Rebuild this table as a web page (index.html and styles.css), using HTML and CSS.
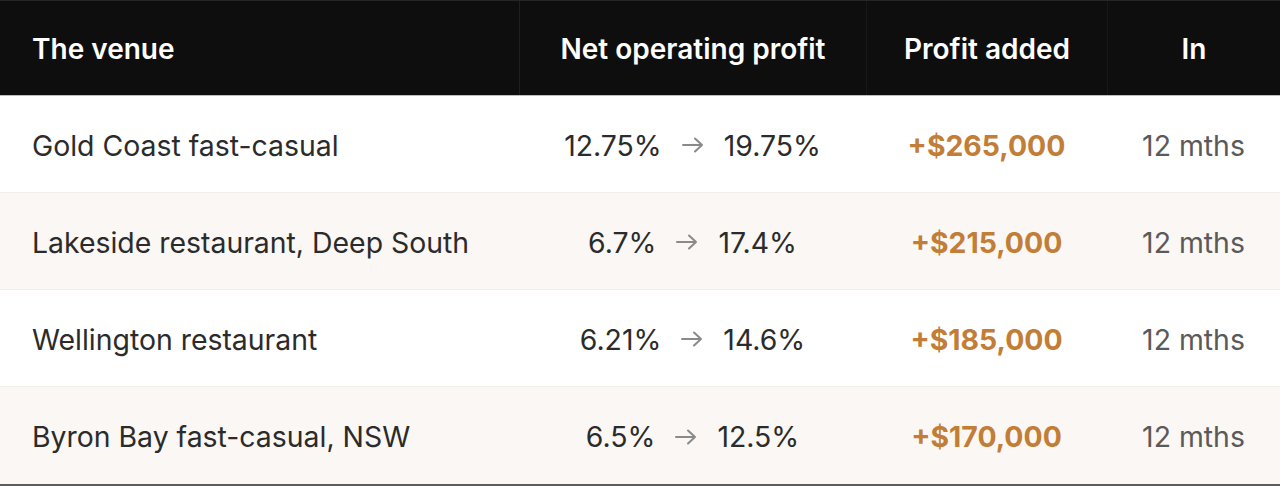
FILE: index.html
```html
<!DOCTYPE html>
<html lang="en">
<head>
<meta charset="utf-8">
<title>Results</title>
<link rel="stylesheet" href="styles.css">
</head>
<body>
<div class="table">
  <div class="row head">
    <div class="cell venue">The venue</div>
    <div class="cell c">Net operating profit</div>
    <div class="cell c">Profit added</div>
    <div class="cell c">In</div>
  </div>
  <div class="row">
    <div class="cell venue">Gold Coast fast-casual</div>
    <div class="cell c"><span class="chg">12.75% <svg class="arr" viewBox="0 0 22 16"><path d="M1 8H20M13 1.5L20 8L13 14.5"/></svg> 19.75%</span></div>
    <div class="cell c gain">+$265,000</div>
    <div class="cell c time">12 mths</div>
  </div>
  <div class="row alt">
    <div class="cell venue">Lakeside restaurant, Deep South</div>
    <div class="cell c"><span class="chg">6.7% <svg class="arr" viewBox="0 0 22 16"><path d="M1 8H20M13 1.5L20 8L13 14.5"/></svg> 17.4%</span></div>
    <div class="cell c gain">+$215,000</div>
    <div class="cell c time">12 mths</div>
  </div>
  <div class="row">
    <div class="cell venue">Wellington restaurant</div>
    <div class="cell c"><span class="chg">6.21% <svg class="arr" viewBox="0 0 22 16"><path d="M1 8H20M13 1.5L20 8L13 14.5"/></svg> 14.6%</span></div>
    <div class="cell c gain">+$185,000</div>
    <div class="cell c time">12 mths</div>
  </div>
  <div class="row alt">
    <div class="cell venue">Byron Bay fast-casual, NSW</div>
    <div class="cell c"><span class="chg">6.5% <svg class="arr" viewBox="0 0 22 16"><path d="M1 8H20M13 1.5L20 8L13 14.5"/></svg> 12.5%</span></div>
    <div class="cell c gain">+$170,000</div>
    <div class="cell c time">12 mths</div>
  </div>
</div>
</body>
</html>
```
FILE: styles.css
```css
html, body {
  margin: 0;
  padding: 0;
  background: #ffffff;
}
body {
  font-family: Inter, "Liberation Sans", sans-serif;
  color: #2b2b2b;
}
.table {
  width: 1280px;
  border-top: 1px solid #262626;
  border-bottom: 2px solid #5c5c5c;
}
.row {
  display: grid;
  grid-template-columns: 519px 347px 241px 173px;
  height: 97px;
  box-sizing: border-box;
  border-bottom: 1px solid #f1ede9;
  background: #ffffff;
  font-size: 28.4px;
}
.row.alt {
  background: #faf7f4;
}
.row:last-child {
  border-bottom: none;
}
.row.head {
  height: 95px;
  background: #0e0e0e;
  color: #ffffff;
  font-weight: 600;
  font-size: 28px;
  border-bottom: 1px solid #bdbdbd;
}
.row.head .cell + .cell {
  border-left: 1px solid #181818;
}
.row.head .cell:nth-child(2) {
  border-left-color: #1f1f1f;
}
.cell {
  display: flex;
  align-items: center;
  white-space: nowrap;
  padding-top: 2px;
}
.venue {
  padding-left: 32px;
}
.c {
  justify-content: center;
}
.chg {
  display: inline-flex;
  align-items: center;
  gap: 20px;
  color: #2b2b2b;
}
.arr {
  width: 22px;
  height: 16px;
  fill: none;
  stroke: #8a8a8a;
  stroke-width: 2;
  stroke-linecap: round;
  stroke-linejoin: round;
}
.gain {
  color: #c27d36;
  font-weight: 700;
}
.time {
  color: #5a5a5a;
}
```
